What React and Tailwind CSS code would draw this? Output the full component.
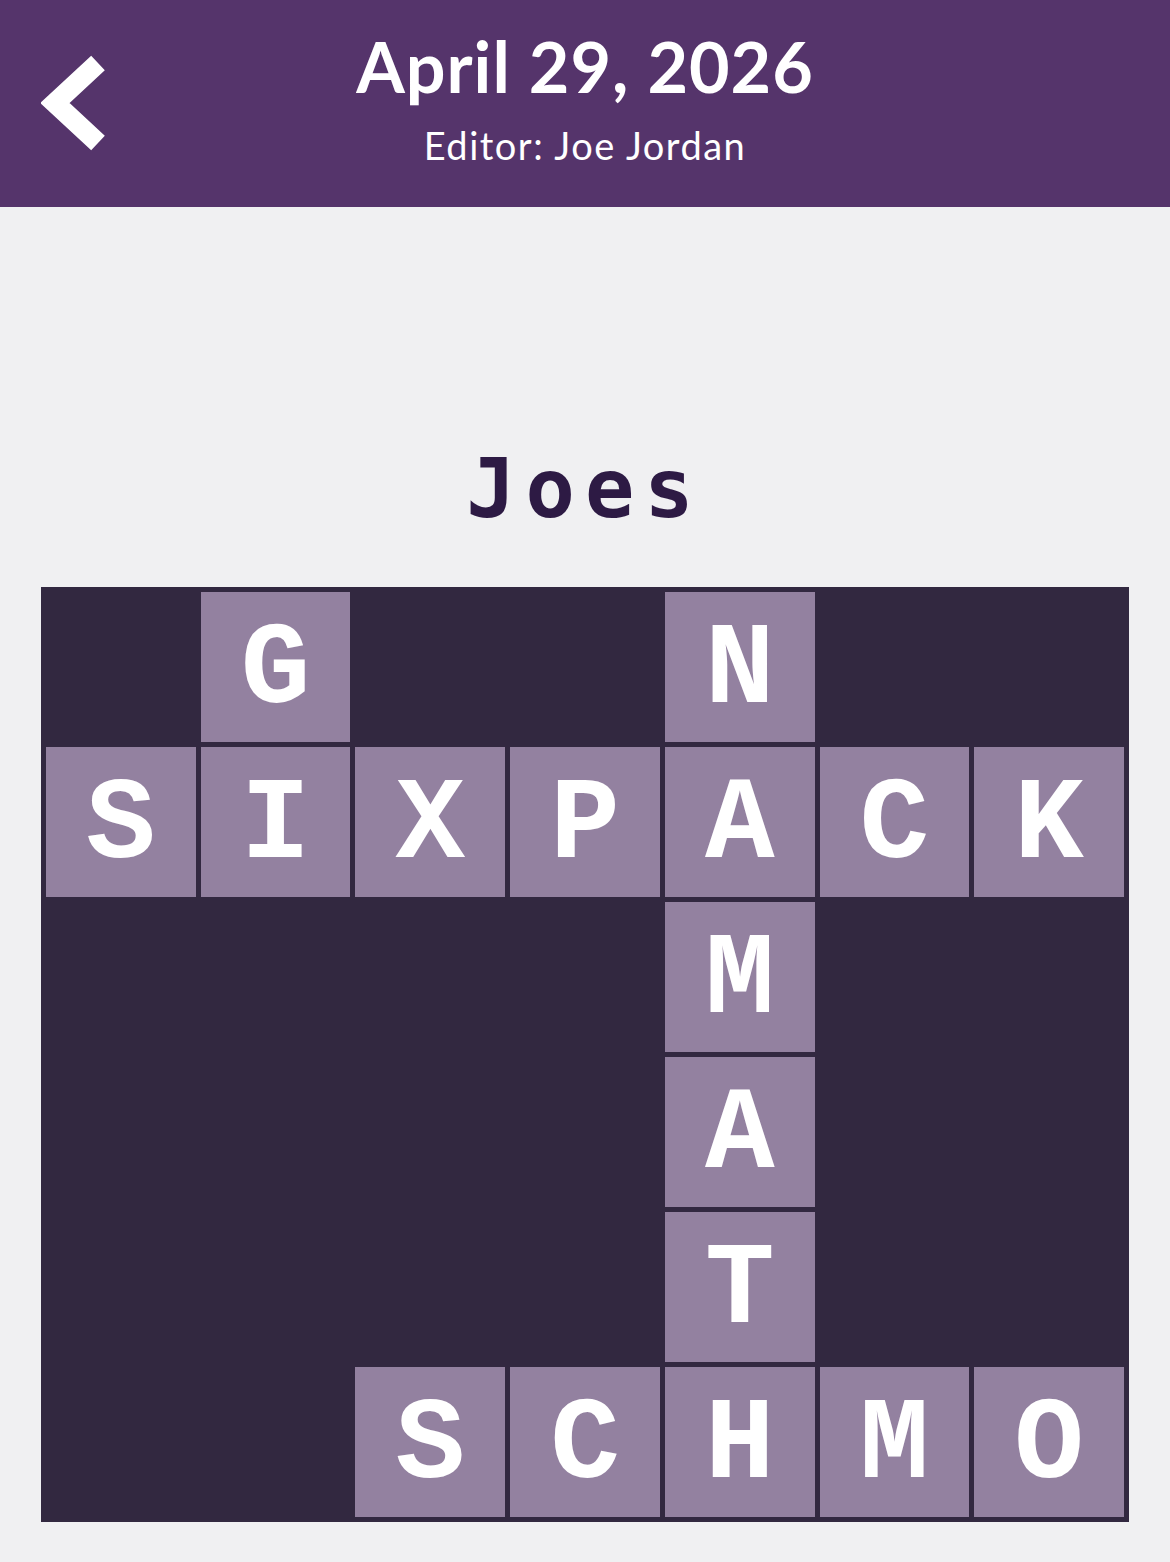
const board = [
  ['', 'G', '', '', 'N', '', ''],
  ['S', 'I', 'X', 'P', 'A', 'C', 'K'],
  ['', '', '', '', 'M', '', ''],
  ['', '', '', '', 'A', '', ''],
  ['', '', '', '', 'T', '', ''],
  ['', '', 'S', 'C', 'H', 'M', 'O'],
];

function BackChevron() {
  return (
    <svg width="80" height="110" viewBox="0 0 80 110" className="block">
      <polyline
        points="57,10 14,50 57,90"
        fill="none"
        stroke="white"
        strokeWidth="20"
        strokeLinecap="butt"
        strokeLinejoin="miter"
      />
    </svg>
  );
}

function Header() {
  return (
    <header className="relative h-[207px] bg-[#55346b] text-white">
      <button className="absolute left-[41px] top-[53px]">
        <BackChevron />
      </button>
      <div className="flex flex-col items-center pt-[26px]">
        <h1 className="font-['Lato',sans-serif] text-[70px] font-bold leading-[80px] tracking-[1px]">
          April 29, 2026
        </h1>
        <p className="mt-[18px] font-['Lato',sans-serif] text-[38px] leading-[42px] tracking-[1.5px]">
          Editor: Joe Jordan
        </p>
      </div>
    </header>
  );
}

function Cell({ letter }) {
  if (!letter) return <div className="h-[150px]" />;
  return (
    <div className="flex h-[150px] items-center justify-center bg-[#9381a0] pt-[8px] font-['Liberation_Mono',monospace] text-[116px] font-bold leading-none text-white">
      {letter}
    </div>
  );
}

export default function App() {
  return (
    <div className="min-h-[1562px] bg-[#f0f0f2]">
      <Header />
      <main className="px-[41px] pt-[241px]">
        <h2 className="h-[82px] text-center font-['DejaVu_Sans_Mono',monospace] text-[82px] font-bold leading-[82px] tracking-[10px] text-[#2d1a44]">
          Joes
        </h2>
        <div className="mt-[57px] grid grid-cols-7 gap-[5px] bg-[#322840] p-[5px]">
          {board.flat().map((letter, i) => (
            <Cell key={i} letter={letter} />
          ))}
        </div>
      </main>
    </div>
  );
}
